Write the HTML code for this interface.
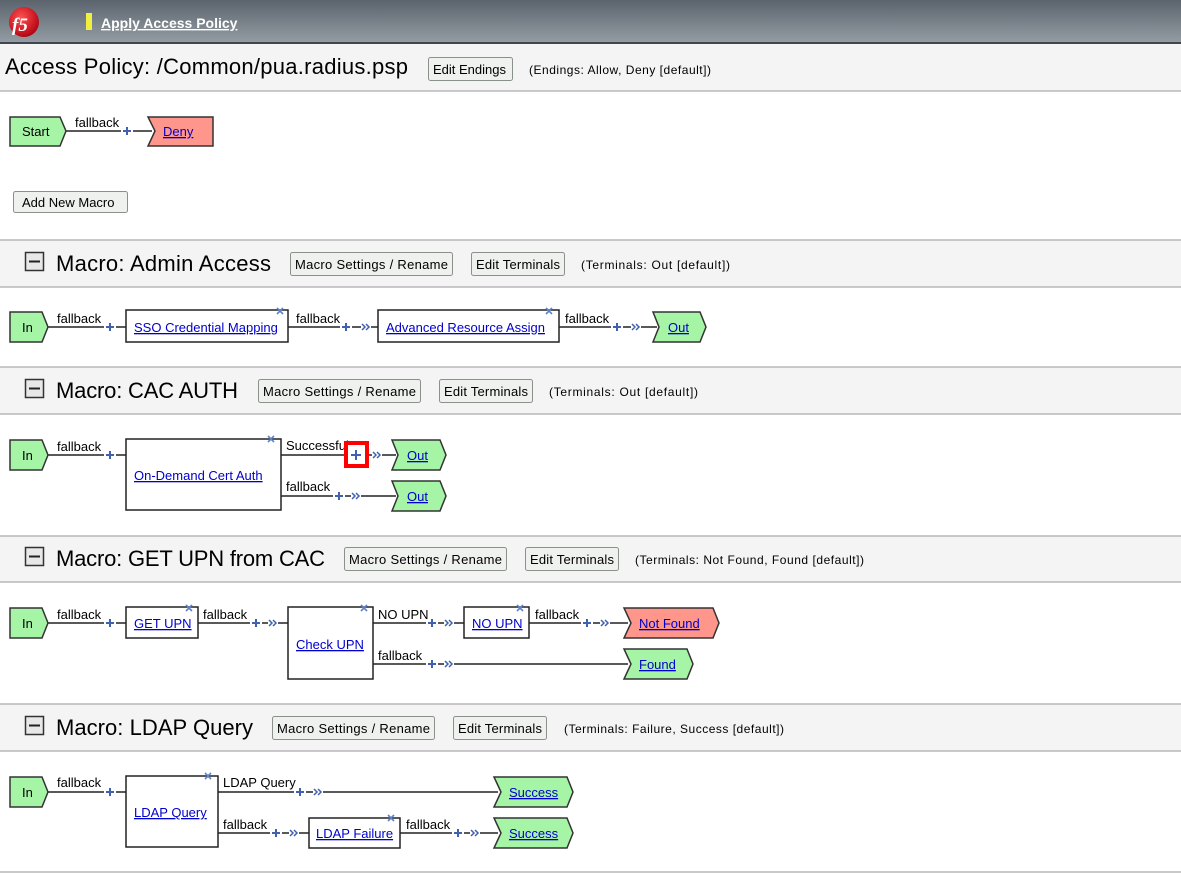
<!DOCTYPE html>
<html><head><meta charset="utf-8"><style>
html,body{margin:0;padding:0;background:#fff;}
svg{display:block;}
text{font-family:"Liberation Sans",sans-serif;font-size:13px;fill:#000;}
.l{fill:#0000cc;text-decoration:underline;}
.h{font-size:22px;}
.s{font-size:12px;}
.ln{stroke:#222;stroke-width:1.5;fill:none;}
.p{stroke:#4060b0;stroke-width:2;fill:none;}
.c{stroke:#4060b0;stroke-width:1.5;fill:none;}
.w{stroke:#fff;stroke-width:7;fill:none;}
.x{stroke:#6080c8;stroke-width:1.6;fill:none;}
.g{fill:#a6f5a6;stroke:#333;stroke-width:1.5;}
.r{fill:#ff968c;stroke:#333;stroke-width:1.5;}
.b{fill:#fff;stroke:#222;stroke-width:1.5;}
.btn{fill:#eef1ee;stroke:#8a918a;stroke-width:1;}
.band{fill:#f4f4f4;}
.bl{stroke:#b8b8b8;stroke-width:1.5;}
</style></head><body>
<svg width="1181" height="875" viewBox="0 0 1181 875" xmlns="http://www.w3.org/2000/svg">
<defs>
<linearGradient id="hg" x1="0" y1="0" x2="0" y2="1"><stop offset="0" stop-color="#5b646d"/><stop offset="1" stop-color="#959da4"/></linearGradient>
<radialGradient id="rg" cx="0.4" cy="0.35" r="0.7"><stop offset="0" stop-color="#ff5050"/><stop offset="1" stop-color="#b00010"/></radialGradient>
</defs>
<rect x="0" y="0" width="1181" height="43" fill="url(#hg)"/>
<rect x="0" y="42" width="1181" height="2" fill="#3f464d"/>
<circle cx="24" cy="22" r="15" fill="url(#rg)"/>
<text x="12" y="31" style="font-size:19px;font-weight:bold;font-style:italic;fill:#fff;font-family:'Liberation Serif',serif">f5</text>
<rect x="86" y="13" width="6" height="17" fill="#f0f040"/>
<text x="101" y="28" style="font-size:14px;font-weight:bold;fill:#fff;text-decoration:underline">Apply Access Policy</text>

<rect class="band" x="0" y="44" width="1181" height="47"/>
<line class="bl" x1="0" y1="91" x2="1181" y2="91"/>
<text x="5" y="74" class="h" textLength="403">Access Policy: /Common/pua.radius.psp</text>
<rect class="btn" x="428.5" y="57.5" width="84" height="23" rx="2"/>
<text x="433" y="74">Edit Endings</text>
<text x="529" y="74" class="s" textLength="182">(Endings: Allow, Deny [default])</text>

<!-- start row -->
<line class="ln" x1="66" y1="131" x2="152" y2="131"/>
<path class="g" d="M10 117H60L66 131L60 146H10Z"/>
<text x="22" y="136">Start</text>
<text x="75" y="127">fallback</text>
<path class="w" d="M121 131H133"/>
<path class="p" d="M123 131H131M127 127V135"/>
<path class="r" d="M148 117H213V146H148L155 131Z"/>
<text x="163" y="136" class="l">Deny</text>
<rect class="btn" x="13.5" y="191.5" width="114" height="21" rx="2"/>
<text x="22" y="207">Add New Macro</text>

<g>
<rect class="band" x="0" y="240" width="1181" height="47"/><line class="bl" x1="0" y1="240" x2="1181" y2="240"/><line class="bl" x1="0" y1="287" x2="1181" y2="287"/>
<rect class="band" x="0" y="367" width="1181" height="47"/><line class="bl" x1="0" y1="367" x2="1181" y2="367"/><line class="bl" x1="0" y1="414" x2="1181" y2="414"/>
<rect class="band" x="0" y="536" width="1181" height="46"/><line class="bl" x1="0" y1="536" x2="1181" y2="536"/><line class="bl" x1="0" y1="582" x2="1181" y2="582"/>
<rect class="band" x="0" y="704" width="1181" height="47"/><line class="bl" x1="0" y1="704" x2="1181" y2="704"/><line class="bl" x1="0" y1="751" x2="1181" y2="751"/>
<line class="bl" x1="0" y1="872" x2="1181" y2="872"/>
</g>

<g>
<rect x="25.5" y="252.5" width="18" height="18" fill="#e8e8e8" stroke="#333" stroke-width="1.5"/><path d="M29 261.5H40" stroke="#222" stroke-width="2"/>
<text x="56" y="271" class="h" textLength="215">Macro: Admin Access</text>
<rect class="btn" x="290.5" y="252.5" width="162" height="23" rx="2"/><text x="295" y="269" textLength="153">Macro Settings / Rename</text>
<rect class="btn" x="471.5" y="252.5" width="93" height="23" rx="2"/><text x="476" y="269" textLength="84">Edit Terminals</text>
<text x="581" y="269" class="s" textLength="149">(Terminals: Out [default])</text>

<rect x="25.5" y="379.5" width="18" height="18" fill="#e8e8e8" stroke="#333" stroke-width="1.5"/><path d="M29 388.5H40" stroke="#222" stroke-width="2"/>
<text x="56" y="398" class="h" textLength="182">Macro: CAC AUTH</text>
<rect class="btn" x="258.5" y="379.5" width="162" height="23" rx="2"/><text x="263" y="396" textLength="153">Macro Settings / Rename</text>
<rect class="btn" x="439.5" y="379.5" width="93" height="23" rx="2"/><text x="444" y="396" textLength="84">Edit Terminals</text>
<text x="549" y="396" class="s" textLength="149">(Terminals: Out [default])</text>

<rect x="25.5" y="547.5" width="18" height="18" fill="#e8e8e8" stroke="#333" stroke-width="1.5"/><path d="M29 556.5H40" stroke="#222" stroke-width="2"/>
<text x="56" y="566" class="h" textLength="269">Macro: GET UPN from CAC</text>
<rect class="btn" x="344.5" y="547.5" width="162" height="23" rx="2"/><text x="349" y="564" textLength="153">Macro Settings / Rename</text>
<rect class="btn" x="525.5" y="547.5" width="93" height="23" rx="2"/><text x="530" y="564" textLength="84">Edit Terminals</text>
<text x="635" y="564" class="s" textLength="229">(Terminals: Not Found, Found [default])</text>

<rect x="25.5" y="716.5" width="18" height="18" fill="#e8e8e8" stroke="#333" stroke-width="1.5"/><path d="M29 725.5H40" stroke="#222" stroke-width="2"/>
<text x="56" y="735" class="h" textLength="197">Macro: LDAP Query</text>
<rect class="btn" x="272.5" y="716.5" width="162" height="23" rx="2"/><text x="277" y="733" textLength="153">Macro Settings / Rename</text>
<rect class="btn" x="453.5" y="716.5" width="93" height="23" rx="2"/><text x="458" y="733" textLength="84">Edit Terminals</text>
<text x="564" y="733" class="s" textLength="220">(Terminals: Failure, Success [default])</text>
</g>

<!-- Admin Access row -->
<path class="ln" d="M48 327H126M288 327H378M559 327H657"/>
<path class="g" d="M10 312H42L48 327L42 342H10Z"/><text x="22" y="332">In</text>
<rect class="b" x="126" y="310" width="162" height="32"/><text x="134" y="332" class="l">SSO Credential Mapping</text>
<rect class="b" x="378" y="310" width="181" height="32"/><text x="386" y="332" class="l">Advanced Resource Assign</text>
<path class="g" d="M653 312H700L706 327L700 342H653L659 327Z"/><text x="668" y="332" class="l">Out</text>
<text x="57" y="323">fallback</text><text x="296" y="323">fallback</text><text x="565" y="323">fallback</text>
<path class="w" d="M104 327H116M340 327H352M611 327H623M361 327H371M631 327H641"/>
<path class="p" d="M106 327H114M110 323V331M342 327H350M346 323V331M613 327H621M617 323V331"/>
<path class="c" d="M362 324l3 3l-3 3M366 324l3 3l-3 3M632 324l3 3l-3 3M636 324l3 3l-3 3"/>
<path class="x" d="M277 308l6 6M283 308l-6 6M546 308l6 6M552 308l-6 6"/>

<!-- CAC row -->
<path class="ln" d="M48 455H126M281 455H396M281 496H396"/>
<path class="g" d="M10 440H42L48 455L42 470H10Z"/><text x="22" y="460">In</text>
<rect class="b" x="126" y="439" width="155" height="71"/><text x="134" y="480" class="l">On-Demand Cert Auth</text>
<text x="57" y="451">fallback</text><text x="286" y="450">Successful</text><text x="286" y="491">fallback</text>
<path class="w" d="M104 455H116M333 496H345M351 496H361M372 455H382"/>
<rect x="346" y="443" width="21" height="23" fill="#fff" stroke="#f00" stroke-width="4"/>
<path class="p" d="M106 455H114M110 451V459M351 455H361M356 450V460M335 496H343M339 492V500"/>
<path class="c" d="M373 452l3 3l-3 3M377 452l3 3l-3 3M352 493l3 3l-3 3M356 493l3 3l-3 3"/>
<path class="x" d="M268 436l6 6M274 436l-6 6"/>
<path class="g" d="M392 440H440L446 455L440 470H392L398 455Z"/><text x="407" y="460" class="l">Out</text>
<path class="g" d="M392 481H440L446 496L440 511H392L398 496Z"/><text x="407" y="501" class="l">Out</text>

<!-- GET UPN row -->
<path class="ln" d="M48 623H126M198 623H288M373 623H464M529 623H628M373 664H628"/>
<path class="g" d="M10 608H42L48 623L42 638H10Z"/><text x="22" y="628">In</text>
<rect class="b" x="126" y="607" width="72" height="31"/><text x="134" y="628" class="l">GET UPN</text>
<rect class="b" x="288" y="607" width="85" height="72"/><text x="296" y="649" class="l">Check UPN</text>
<rect class="b" x="464" y="607" width="65" height="31"/><text x="472" y="628" class="l">NO UPN</text>
<path class="r" d="M624 608H713L719 623L713 638H624L631 623Z"/><text x="639" y="628" class="l">Not Found</text>
<path class="g" d="M624 649H687L693 664L687 679H624L631 664Z"/><text x="639" y="669" class="l">Found</text>
<text x="57" y="619">fallback</text><text x="203" y="619">fallback</text><text x="378" y="619">NO UPN</text><text x="535" y="619">fallback</text><text x="378" y="660">fallback</text>
<path class="w" d="M104 623H116M250 623H262M426 623H438M581 623H593M426 664H438M268 623H278M444 623H454M600 623H610M444 664H454"/>
<path class="p" d="M106 623H114M110 619V627M252 623H260M256 619V627M428 623H436M432 619V627M583 623H591M587 619V627M428 664H436M432 660V668"/>
<path class="c" d="M269 620l3 3l-3 3M273 620l3 3l-3 3M445 620l3 3l-3 3M449 620l3 3l-3 3M601 620l3 3l-3 3M605 620l3 3l-3 3M445 661l3 3l-3 3M449 661l3 3l-3 3"/>
<path class="x" d="M186 605l6 6M192 605l-6 6M361 605l6 6M367 605l-6 6M517 605l6 6M523 605l-6 6"/>

<!-- LDAP row -->
<path class="ln" d="M48 792H126M218 792H498M218 833H309M400 833H498"/>
<path class="g" d="M10 777H42L48 792L42 807H10Z"/><text x="22" y="797">In</text>
<rect class="b" x="126" y="776" width="92" height="71"/><text x="134" y="817" class="l">LDAP Query</text>
<rect class="b" x="309" y="818" width="91" height="30"/><text x="316" y="838" class="l">LDAP Failure</text>
<path class="g" d="M494 777H567L573 792L567 807H494L501 792Z"/><text x="509" y="797" class="l">Success</text>
<path class="g" d="M494 818H567L573 833L567 848H494L501 833Z"/><text x="509" y="838" class="l">Success</text>
<text x="57" y="787">fallback</text><text x="223" y="787">LDAP Query</text><text x="223" y="829">fallback</text><text x="406" y="829">fallback</text>
<path class="w" d="M104 792H116M294 792H306M270 833H282M452 833H464M313 792H323M289 833H299M470 833H480"/>
<path class="p" d="M106 792H114M110 788V796M296 792H304M300 788V796M272 833H280M276 829V837M454 833H462M458 829V837"/>
<path class="c" d="M314 789l3 3l-3 3M318 789l3 3l-3 3M290 830l3 3l-3 3M294 830l3 3l-3 3M471 830l3 3l-3 3M475 830l3 3l-3 3"/>
<path class="x" d="M205 773l6 6M211 773l-6 6M388 815l6 6M394 815l-6 6"/>
</svg>
</body></html>
